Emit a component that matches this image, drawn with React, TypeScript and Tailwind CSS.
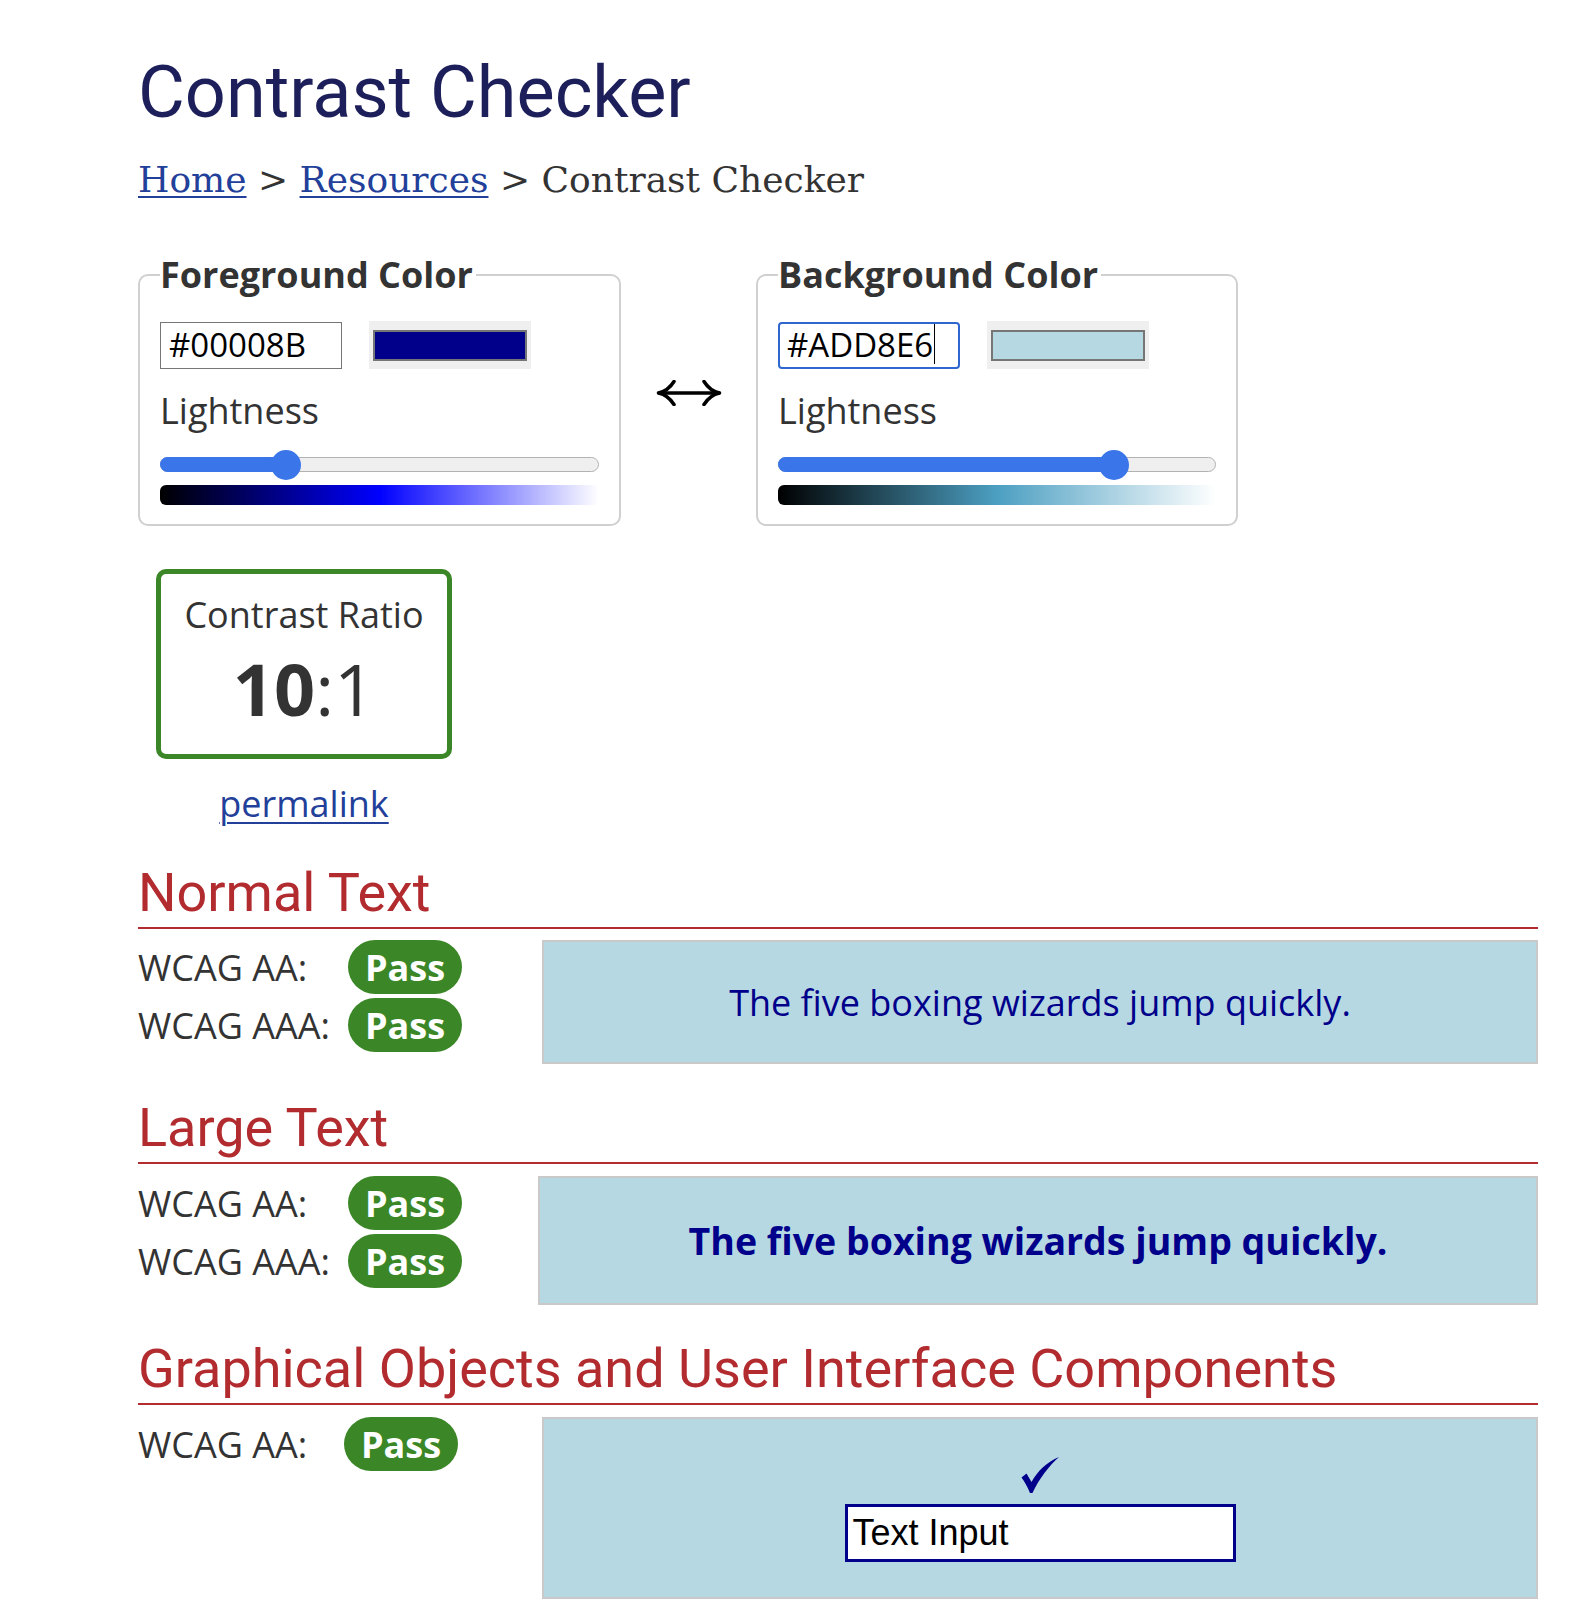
import React from "react";

function Arrow() {
  return (
    <svg width="66" height="26" viewBox="0 0 66 26" fill="none" stroke="#000" strokeWidth="3.5" strokeLinecap="round" strokeLinejoin="round">
      <path d="M3 13H63" />
      <path d="M18 1.5Q12 11 2.5 13Q12 15 18 24.5" />
      <path d="M48 1.5Q54 11 63.5 13Q54 15 48 24.5" />
    </svg>
  );
}

function Check() {
  return (
    <svg width="38" height="36" viewBox="0 0 38 36">
      <path d="M0.5 20.5L5.5 16.5L10.5 25C16.5 14 26 5 38 0C28 9 18.5 21 11.5 36L9 36C6.5 30 3.5 24.5 0.5 20.5Z" fill="#00008b" />
    </svg>
  );
}

function Badge() {
  return (
    <span className="inline-flex h-[54px] w-[114px] items-center justify-center rounded-full bg-[#3b8727] font-bold text-white">
      Pass
    </span>
  );
}

function Row({ label, labelW }: { label: string; labelW: string }) {
  return (
    <div className="flex h-[54px] items-center">
      <span className={labelW}>{label}</span>
      <Badge />
    </div>
  );
}

export default function App() {
  return (
    <div className="min-h-screen bg-white">
      <div className="ml-[138px] w-[1400px] pt-[50px] pb-[14px] font-['Open_Sans',sans-serif] text-[36px] leading-[normal] text-[#333]">
        <h1 className="font-['Roboto',sans-serif] text-[72px] font-normal leading-[normal] text-[#1d1f5b]">
          Contrast Checker
        </h1>
        <nav className="mt-[24px] font-['DejaVu_Serif',serif] text-[36px] leading-[normal] text-[#333]">
          <a className="text-[#22409a] underline decoration-[2px] underline-offset-[4px]">Home</a>
          {" > "}
          <a className="text-[#22409a] underline decoration-[2px] underline-offset-[4px]">Resources</a>
          {" > "}Contrast Checker
        </nav>

        <div className="mt-[50px] flex items-start">
          <fieldset className="w-[483px] rounded-[10px] border-2 border-[#d0d0d0] px-[20px] pt-[22px] pb-[19px]">
            <legend className="pr-[3px] font-bold">Foreground Color</legend>
            <div className="flex items-center gap-[27px]">
              <div className="flex h-[47px] w-[182px] items-center border border-[#767676] pl-[8px] pb-[2px] text-[33px] text-black">
                #00008B
              </div>
              <div className="flex h-[48px] w-[162px] items-center bg-[#efefef] px-[4px]">
                <div className="h-[31px] w-full border-2 border-[#767676] bg-[#00008b]" />
              </div>
            </div>
            <div className="mt-[17px]">Lightness</div>
            <div className="relative mt-[15px] h-[30px]">
              <div className="absolute left-0 right-0 top-[7px] h-[15px] rounded-full border border-[#b2b2b2] bg-[#efefef]" />
              <div className="absolute left-0 top-[7px] h-[15px] w-[126px] rounded-l-full bg-[#3a75e9]" />
              <div className="absolute left-[111px] top-0 h-[30px] w-[30px] rounded-full bg-[#3a75e9]" />
            </div>
            <div className="mt-[5px] h-[20px] rounded-[6px] bg-[linear-gradient(to_right,#000_0%,#0000ff_50%,#fff_100%)]" />
          </fieldset>

          <div className="mt-[130px] flex w-[135px] justify-center">
            <Arrow />
          </div>

          <fieldset className="w-[482px] rounded-[10px] border-2 border-[#d0d0d0] px-[20px] pt-[22px] pb-[19px]">
            <legend className="pr-[3px] font-bold">Background Color</legend>
            <div className="flex items-center gap-[27px]">
              <div className="flex h-[47px] w-[182px] items-center rounded-[4px] border-2 border-[#2f66cf] pl-[7px] pb-[2px] text-[33px] text-black">
                #ADD8E6
                <span className="ml-[1px] h-[40px] w-[1px] bg-black" />
              </div>
              <div className="flex h-[48px] w-[162px] items-center bg-[#efefef] px-[4px]">
                <div className="h-[31px] w-full border-2 border-[#767676] bg-[#b6d8e3]" />
              </div>
            </div>
            <div className="mt-[17px]">Lightness</div>
            <div className="relative mt-[15px] h-[30px]">
              <div className="absolute left-0 right-0 top-[7px] h-[15px] rounded-full border border-[#b2b2b2] bg-[#efefef]" />
              <div className="absolute left-0 top-[7px] h-[15px] w-[336px] rounded-l-full bg-[#3a75e9]" />
              <div className="absolute left-[321px] top-0 h-[30px] w-[30px] rounded-full bg-[#3a75e9]" />
            </div>
            <div className="mt-[5px] h-[20px] rounded-[6px] bg-[linear-gradient(to_right,#000_0%,#4c9fc2_50%,#fff_100%)]" />
          </fieldset>
        </div>

        <div className="mt-[43px] ml-[18px] flex w-[296px] flex-col items-center">
          <div className="flex h-[190px] w-[296px] flex-col items-center rounded-[10px] border-[5px] border-[#3b8727] pt-[16px]">
            <div>Contrast Ratio</div>
            <div className="text-[72px]">
              <span className="font-bold">10</span>:1
            </div>
          </div>
          <a className="mt-[20px] text-[#22409a] underline decoration-[2px] underline-offset-[5px]">permalink</a>
        </div>

        <h2 className="mt-[33px] border-b-2 border-[#b22b2f] pb-[3px] font-['Roboto',sans-serif] text-[54px] font-normal leading-[normal] text-[#b22b2f]">
          Normal Text
        </h2>
        <div className="mt-[11px] flex items-start">
          <div className="flex w-[404px] flex-col gap-[4px]">
            <Row label="WCAG AA:" labelW="w-[210px]" />
            <Row label="WCAG AAA:" labelW="w-[210px]" />
          </div>
          <div className="flex h-[124px] flex-1 items-center justify-center border-2 border-[#c9c9c9] bg-[#b6d8e3] text-[#00008b]">
            The five boxing wizards jump quickly.
          </div>
        </div>

        <h2 className="mt-[32px] border-b-2 border-[#b22b2f] pb-[3px] font-['Roboto',sans-serif] text-[54px] font-normal leading-[normal] text-[#b22b2f]">
          Large Text
        </h2>
        <div className="mt-[12px] flex items-start">
          <div className="flex w-[400px] flex-col gap-[4px]">
            <Row label="WCAG AA:" labelW="w-[210px]" />
            <Row label="WCAG AAA:" labelW="w-[210px]" />
          </div>
          <div className="flex h-[129px] flex-1 items-center justify-center border-2 border-[#c9c9c9] bg-[#b6d8e3] text-[37.5px] font-bold text-[#00008b]">
            The five boxing wizards jump quickly.
          </div>
        </div>

        <h2 className="mt-[32px] border-b-2 border-[#b22b2f] pb-[3px] font-['Roboto',sans-serif] text-[54px] font-normal leading-[normal] text-[#b22b2f]">
          Graphical Objects and User Interface Components
        </h2>
        <div className="mt-[12px] flex items-start">
          <div className="flex w-[404px] flex-col">
            <Row label="WCAG AA:" labelW="w-[206px]" />
          </div>
          <div className="flex h-[182px] flex-1 flex-col items-center justify-center gap-[11px] border-2 border-[#c9c9c9] bg-[#b6d8e3] pt-[3px]">
            <Check />
            <div className="flex h-[58px] w-[391px] items-center border-[3px] border-[#00008b] bg-white pl-[5px] font-['Liberation_Sans',sans-serif] text-[36px] text-black">
              Text Input
            </div>
          </div>
        </div>
      </div>
    </div>
  );
}
